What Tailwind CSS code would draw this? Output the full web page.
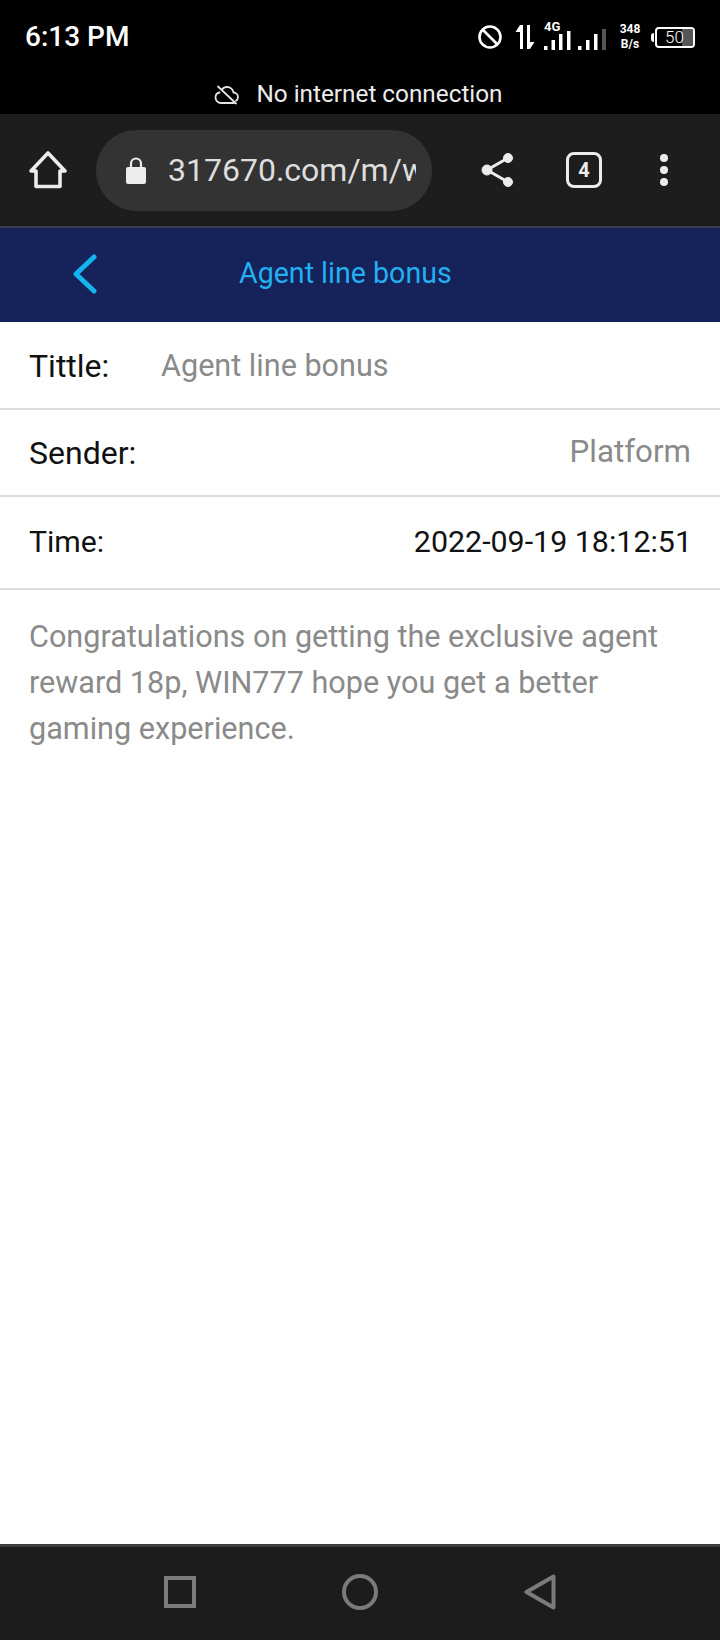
<!DOCTYPE html>
<html lang="en">
<head>
  <meta charset="UTF-8">
  <title>Agent line bonus</title>
  <meta name="viewport" content="width=device-width, initial-scale=1">
  <script src="https://cdn.jsdelivr.net/npm/@tailwindcss/browser@4"></script>
</head>
<body class="bg-white font-['Roboto',sans-serif]">
<div class="w-[720px] h-[1640px] flex flex-col overflow-hidden">

  <!-- status bar -->
  <header class="h-[114px] shrink-0 bg-black text-white flex flex-col">
    <div class="h-[74px] flex items-center justify-between pl-[25px] pr-[25px]">
      <span class="text-[28px] font-medium leading-none">6:13 PM</span>
      <div class="flex items-center">
        <svg class="w-[26px] h-[26px]" viewBox="0 0 26 26" fill="none" stroke="#fff" stroke-width="2.600"><circle cx="13" cy="13" r="10.500"/><path d="M5.500 5.500l15 15"/></svg>
        <svg class="w-[20px] h-[26px] ml-[12px]" viewBox="0 0 20 26" fill="#fff"><path d="M5 1l0 24h3V1zM5 1L0.500 8h4.500z"/><path d="M12 1h3v24h-3zM15 25l4.500-7H15z"/></svg>
        <div class="relative w-[74px] h-[30px] ml-[6px]">
          <span class="absolute left-[3px] top-[-2px] text-[13px] font-bold leading-none">4G</span>
          <svg class="absolute left-0 top-0 w-[74px] h-[30px]" viewBox="0 0 74 30" fill="#fff"><rect x="3" y="24" width="3.500" height="4"/><rect x="10.500" y="18" width="3.500" height="10"/><rect x="18" y="12" width="3.500" height="16"/><rect x="26" y="9" width="3.500" height="19"/><rect x="37" y="24" width="3.500" height="4"/><rect x="45" y="18" width="3.500" height="10"/><rect x="53" y="12" width="3.500" height="16"/><rect x="61" y="7" width="4" height="21" fill="#555"/></svg>
        </div>
        <div class="w-[24px] ml-[3px] text-[12px] font-bold leading-[15px] text-center">348<br>B/s</div>
        <div class="w-[3px] h-[9px] bg-white rounded-l-sm ml-[9px] mr-[1px]"></div>
        <div class="w-[40px] h-[21px] border-2 border-white rounded-[4px] relative overflow-hidden flex items-center pl-[8px]">
          <div class="absolute right-0 top-0 bottom-0 w-[11px] bg-[#555]"></div>
          <span class="relative text-[17px] leading-none font-light">50</span>
        </div>
      </div>
    </div>
    <div class="flex-1 flex items-center justify-center gap-[16px] text-[#ececec] pt-[1px] pr-[3px]">
      <svg class="w-[26px] h-[20px]" viewBox="0 0 26 20" fill="none" stroke="#e5e5e5" stroke-width="1.800" stroke-linecap="round" stroke-linejoin="round"><path d="M8 4.500C9 3 11 2 13 2c3.500 0 6 2.500 6.500 5.500 2.500 0 4.500 2 4.500 4.500 0 1.500-.8 3-2 3.800"/><path d="M5.500 7.500C3 8 1.500 10 1.500 12.500 1.500 15.500 4 18 7 18h13"/><path d="M4 1.500L22 18.500"/></svg>
      <span class="text-[24.300px] leading-none">No internet connection</span>
    </div>
  </header>

  <!-- browser toolbar -->
  <div class="h-[114px] shrink-0 bg-[#1d1d1d] border-b-2 border-[#3a3a50] flex items-center">
    <div class="w-[96px] flex justify-center">
      <svg class="w-[38px] h-[38px]" viewBox="0 0 38 38" fill="none" stroke="#ececec" stroke-width="3.600" stroke-linejoin="round" stroke-linecap="round"><path d="M2 20L19 2l17 18h-5v15.500H7V20z"/></svg>
    </div>
    <div class="w-[336px] h-[81px] bg-[#333333] rounded-full flex items-center pl-[30px] pr-[16px]">
      <svg class="w-[20px] h-[27px] shrink-0" viewBox="0 0 20 27" fill="#ececec"><path d="M2 10h16a2 2 0 0 1 2 2v13a2 2 0 0 1-2 2H2a2 2 0 0 1-2-2V12a2 2 0 0 1 2-2z"/><path d="M5 11V6.500a5 5 0 0 1 10 0V11" fill="none" stroke="#ececec" stroke-width="2.200"/></svg>
      <div class="ml-[22px] flex-1 overflow-hidden whitespace-nowrap text-[32px] leading-none text-[#dedede]">317670.com/m/w</div>
    </div>
    <svg class="w-[34px] h-[38px] ml-[49px]" viewBox="0 0 34 38" fill="#ececec" stroke="#ececec"><circle cx="27" cy="7" r="4.500"/><circle cx="6" cy="19" r="5"/><circle cx="27" cy="31" r="4.500"/><path d="M27 7L6 19l21 12" fill="none" stroke-width="3"/></svg>
    <div class="w-[36px] h-[36px] ml-[51px] border-[3.500px] border-[#ececec] rounded-[8px] flex items-center justify-center text-[#ececec] text-[20px] font-bold leading-none">4</div>
    <div class="w-[8px] ml-[58px] flex flex-col gap-[4px]">
      <div class="w-[8px] h-[8px] rounded-full bg-[#ececec]"></div>
      <div class="w-[8px] h-[8px] rounded-full bg-[#ececec]"></div>
      <div class="w-[8px] h-[8px] rounded-full bg-[#ececec]"></div>
    </div>
  </div>

  <!-- page header -->
  <div class="h-[94px] shrink-0 bg-[#16225a] flex items-center pb-[3px]">
    <svg class="w-[24px] h-[40px] ml-[73px]" viewBox="0 0 24 40" fill="none" stroke="#13b4f0" stroke-width="5" stroke-linecap="round" stroke-linejoin="round"><path d="M21 3L3 20l18 17"/></svg>
    <span class="ml-[142px] text-[28.600px] leading-none text-[#22b0f0]">Agent line bonus</span>
  </div>

  <!-- detail rows -->
  <main class="flex-1 bg-white">
    <div class="h-[88px] flex items-center px-[29px] pt-[1px] border-b-2 border-[#dcdcdc]">
      <span class="w-[132px] text-[32px] text-[#111]">Tittle:</span>
      <span class="text-[30.600px] text-[#8a8a8a]">Agent line bonus</span>
    </div>
    <div class="h-[87px] flex items-center justify-between px-[29px] border-b-2 border-[#dcdcdc]">
      <span class="text-[32px] text-[#111]">Sender:</span>
      <span class="text-[31.300px] text-[#8a8a8a]">Platform</span>
    </div>
    <div class="h-[93px] flex items-center justify-between pl-[29px] pr-[28px] pb-[1px] border-b-2 border-[#dcdcdc]">
      <span class="text-[30.200px] text-[#111]">Time:</span>
      <span class="text-[30.400px] text-[#111]">2022-09-19 18:12:51</span>
    </div>
    <p class="px-[29px] pt-[24px] text-[30.600px] leading-[46px] text-[#8a8a8a]">Congratulations on getting the exclusive agent reward 18p, WIN777 hope you get a better gaming experience.</p>
  </main>

  <!-- android nav bar -->
  <nav class="h-[96px] shrink-0 bg-[#1c1c1c] border-t-[3px] border-[#3e3e3e] flex items-center justify-between px-[164px] pb-[3px]">
    <div class="w-[32px] h-[32px] border-4 border-[#7b7b7b]"></div>
    <div class="w-[36px] h-[36px] border-4 border-[#7b7b7b] rounded-full"></div>
    <svg class="w-[32px] h-[36px]" viewBox="0 0 32 36" fill="none" stroke="#7b7b7b" stroke-width="4" stroke-linejoin="round"><path d="M29.500 2.500v31L2.500 18z"/></svg>
  </nav>
</div>
</body>
</html>
